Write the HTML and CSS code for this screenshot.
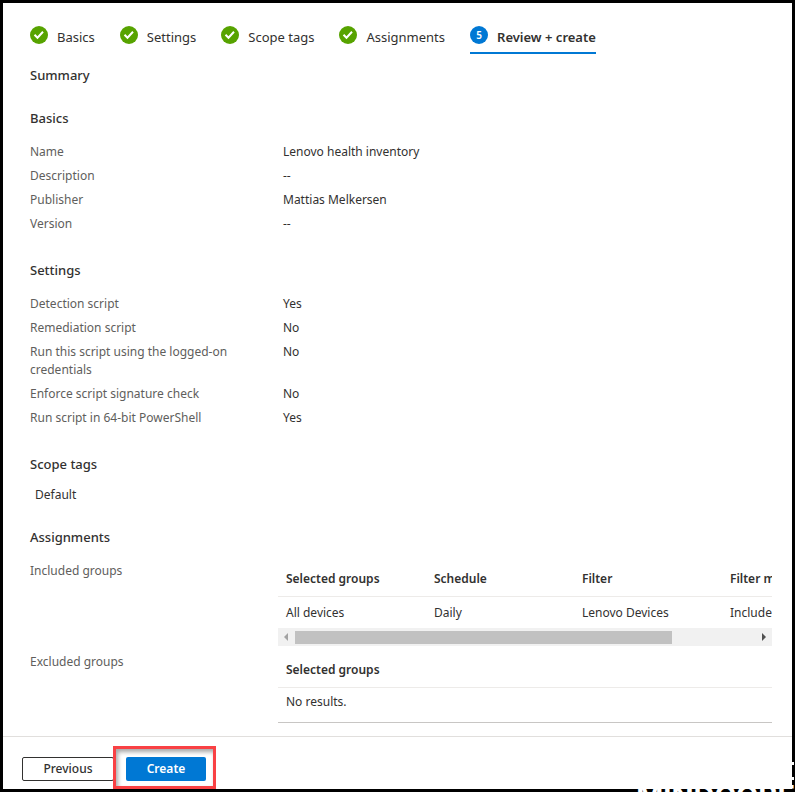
FILE: index.html
```html
<!DOCTYPE html>
<html lang="en">
<head>
    <meta charset="UTF-8">
    <meta name="viewport" content="width=device-width, initial-scale=1.0">
    <title>Create custom script</title>
    <link rel="stylesheet" href="styles.css">
</head>
<body>
    <div class="page">
        <nav class="steps">
            <a class="step" href="#basics">
                <svg class="step-icon" viewBox="0 0 18 18"><circle cx="9" cy="9" r="9"/><path d="M4.500 8.800l3 3 5.500-6"/></svg>
                <span>Basics</span>
            </a>
            <a class="step" href="#settings">
                <svg class="step-icon" viewBox="0 0 18 18"><circle cx="9" cy="9" r="9"/><path d="M4.500 8.800l3 3 5.500-6"/></svg>
                <span>Settings</span>
            </a>
            <a class="step" href="#scope-tags">
                <svg class="step-icon" viewBox="0 0 18 18"><circle cx="9" cy="9" r="9"/><path d="M4.500 8.800l3 3 5.500-6"/></svg>
                <span>Scope tags</span>
            </a>
            <a class="step" href="#assignments">
                <svg class="step-icon" viewBox="0 0 18 18"><circle cx="9" cy="9" r="9"/><path d="M4.500 8.800l3 3 5.500-6"/></svg>
                <span>Assignments</span>
            </a>
            <a class="step active" href="#summary">
                <span class="step-number">5</span>
                <span>Review + create</span>
            </a>
        </nav>

        <main class="summary" id="summary">
            <h2 class="title">Summary</h2>

            <section id="basics">
                <h3>Basics</h3>
                <dl class="details">
                    <dt>Name</dt><dd>Lenovo health inventory</dd>
                    <dt>Description</dt><dd>--</dd>
                    <dt>Publisher</dt><dd>Mattias Melkersen</dd>
                    <dt>Version</dt><dd>--</dd>
                </dl>
            </section>

            <section id="settings">
                <h3>Settings</h3>
                <dl class="details">
                    <dt>Detection script</dt><dd>Yes</dd>
                    <dt>Remediation script</dt><dd>No</dd>
                    <dt>Run this script using the logged-on credentials</dt><dd>No</dd>
                    <dt>Enforce script signature check</dt><dd>No</dd>
                    <dt>Run script in 64-bit PowerShell</dt><dd>Yes</dd>
                </dl>
            </section>

            <section id="scope-tags">
                <h3>Scope tags</h3>
                <p class="tag">Default</p>
            </section>

            <section id="assignments">
                <h3>Assignments</h3>
                <div class="group">
                    <div class="group-label">Included groups</div>
                    <div class="group-grid">
                        <div class="table-clip">
                            <table class="included">
                                <thead>
                                    <tr><th>Selected groups</th><th>Schedule</th><th>Filter</th><th>Filter mode</th></tr>
                                </thead>
                                <tbody>
                                    <tr><td>All devices</td><td>Daily</td><td>Lenovo Devices</td><td>Include</td></tr>
                                </tbody>
                            </table>
                        </div>
                        <div class="scrollbar">
                            <button class="arrow left" aria-label="Scroll left"><svg viewBox="0 0 17 18"><path d="M10 5v8l-4-4z"/></svg></button>
                            <div class="track"><div class="thumb"></div></div>
                            <button class="arrow right" aria-label="Scroll right"><svg viewBox="0 0 17 18"><path d="M7 5v8l4-4z"/></svg></button>
                        </div>
                    </div>
                </div>
                <div class="group">
                    <div class="group-label">Excluded groups</div>
                    <div class="group-grid">
                        <table class="excluded">
                            <thead>
                                <tr><th>Selected groups</th></tr>
                            </thead>
                            <tbody>
                                <tr><td>No results.</td></tr>
                            </tbody>
                        </table>
                    </div>
                </div>
            </section>
        </main>

        <footer class="footer">
            <button class="btn">Previous</button>
            <div class="highlight">
                <button class="btn primary">Create</button>
            </div>
        </footer>
        <div class="overlay">
            <div class="watermark">MINDCORE</div>
        </div>
    </div>
</body>
</html>
```

FILE: styles.css
```css
* {
    box-sizing: border-box;
}
body {
    margin: 0;
    font-family: "Noto Sans", "Open Sans", sans-serif;
    font-size: 12px;
    line-height: 18px;
    color: #323130;
    background: #fff;
}
.page {
    position: relative;
    display: flex;
    flex-direction: column;
    min-height: 100vh;
    border: 3px solid #000;
}
.steps {
    display: flex;
    gap: 25px;
    padding: 23px 27px 0;
    font-size: 13px;
}
.step {
    display: flex;
    gap: 9px;
    height: 28px;
    color: #323130;
    text-decoration: none;
    white-space: nowrap;
}
.step span:last-child {
    padding-top: 2px;
}
.step-icon {
    width: 18px;
    height: 18px;
}
.step-icon circle {
    fill: #57a300;
}
.step-icon path {
    fill: none;
    stroke: #fff;
    stroke-width: 2;
}
.step-number {
    width: 18px;
    height: 18px;
    border-radius: 50%;
    background: #0078d4;
    color: #fff;
    font-size: 10px;
    font-weight: 600;
    text-align: center;
}
.active {
    font-weight: 600;
    border-bottom: 2px solid #0078d4;
}
.summary {
    flex-grow: 1;
    padding: 12px 20px 12px 27px;
}
h2, h3 {
    margin: 0;
    font-size: 13px;
    font-weight: 500;
}
.title {
    margin-bottom: 25px;
}
h3 {
    margin-bottom: 16px;
}
.details {
    display: grid;
    grid-template-columns: 213px 1fr;
    gap: 6px 40px;
    margin: 0 0 28px;
}
.details dt, .group-label {
    color: #605e5c;
}
.details dd {
    margin: 0;
}
.tag {
    margin: -3px 5px 24px;
}
.group {
    display: grid;
    grid-template-columns: 248px 1fr;
}
.group-grid {
    min-width: 0;
}
.table-clip {
    overflow: hidden;
}
table {
    width: 100%;
    table-layout: fixed;
    border-collapse: collapse;
}
.included {
    width: 592px;
}
th, td {
    padding: 7px 8px 6px;
    text-align: left;
    font-weight: 400;
    white-space: nowrap;
}
th {
    padding: 8px;
    font-weight: 600;
    border-bottom: 1px solid #edebe9;
}
.excluded {
    border-bottom: 1px solid #c8c6c4;
}
.excluded td {
    padding: 5px 8px 11px;
}
.scrollbar {
    display: flex;
    height: 18px;
    margin-bottom: 7px;
    background: #f1f1f1;
}
.arrow {
    width: 17px;
    height: 18px;
    padding: 0;
    border: none;
    background: none;
}
.arrow svg {
    display: block;
}
.left {
    fill: #a3a3a3;
}
.right {
    fill: #505050;
}
.track {
    flex-grow: 1;
    padding: 3px 0 2px;
}
.thumb {
    width: 82%;
    height: 13px;
    background: #c1c1c1;
}
.footer {
    display: flex;
    align-items: flex-end;
    height: 53px;
    padding-left: 19px;
    border-top: 1px solid #e1dfdd;
}
.btn {
    width: 92px;
    height: 24px;
    margin-bottom: 8px;
    padding: 0;
    border: 1px solid #323130;
    border-radius: 2px;
    background: #fff;
    color: #323130;
    font: inherit;
    font-weight: 500;
}
.primary {
    display: block;
    width: 80px;
    margin: 0;
    border: none;
    background: #0078d4;
    color: #fff;
    font-weight: 600;
}
.highlight {
    position: relative;
    margin-left: -1px;
    padding: 8px 7px 5px 10px;
    border: 3px solid #f94144;
    background: #fff;
    box-shadow: inset 2px 3px 4px rgba(0, 0, 0, 0.35);
}
.overlay {
    position: absolute;
    inset: -3px;
    overflow: hidden;
    pointer-events: none;
}
.overlay::after {
    content: "";
    position: absolute;
    right: 1px;
    bottom: 12px;
    width: 2px;
    height: 12px;
    border: solid #fff;
    border-width: 3px 0;
}
.watermark {
    position: absolute;
    right: 0;
    bottom: -22px;
    color: #fff;
    font-family: Inter, sans-serif;
    font-size: 29px;
    line-height: 36px;
    font-weight: 700;
}
```
